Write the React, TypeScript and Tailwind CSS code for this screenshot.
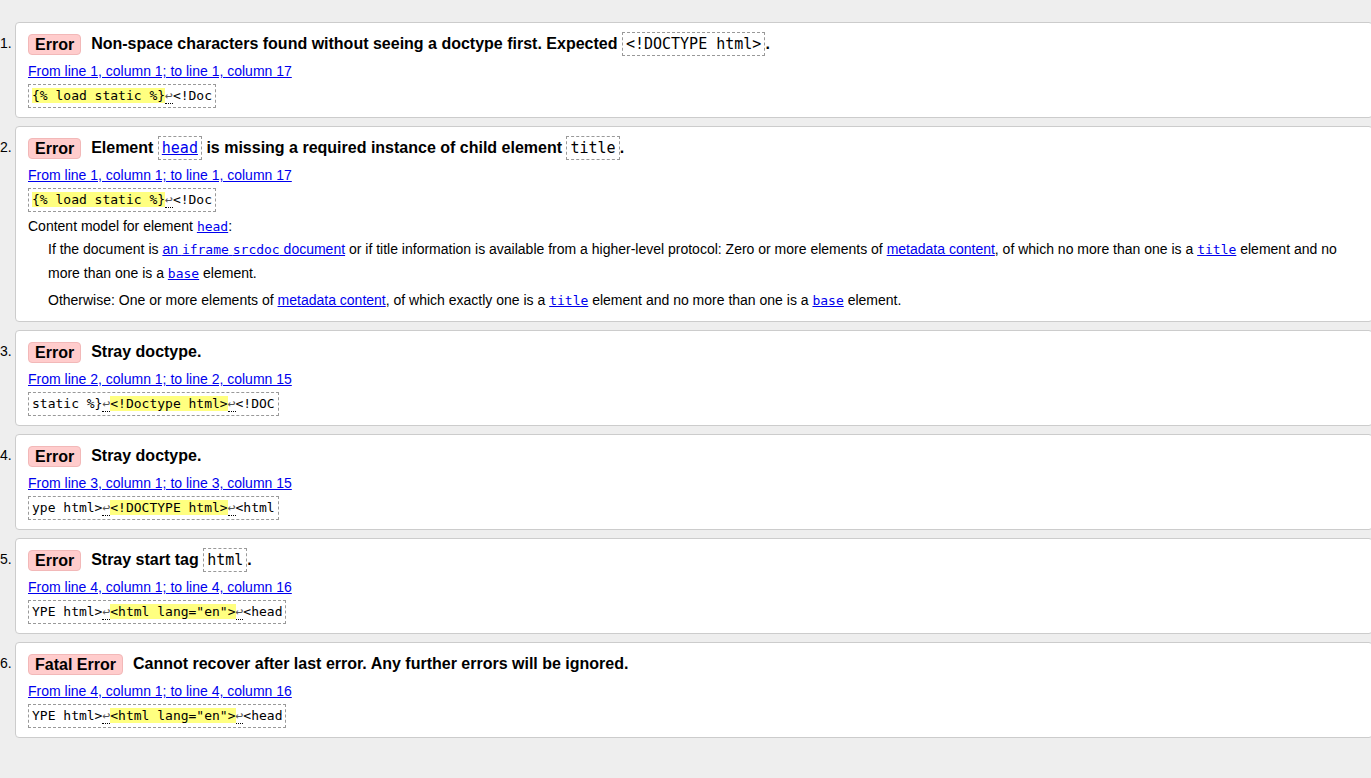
import React from 'react';

const sans = { fontFamily: '"Liberation Sans", Arial, sans-serif' };

const Ret = () => (
  <span className="border-b border-dotted border-black text-[#555]">↩</span>
);

const Hl = ({ children }: { children: React.ReactNode }) => (
  <span className="bg-[#ffff80]">{children}</span>
);

const Extract = ({ children }: { children: React.ReactNode }) => (
  <div className="mt-[2px]">
    <code className="inline-block border border-dashed border-[#999] px-[3px] py-[3px] font-['DejaVu_Sans_Mono',monospace] text-[13px] leading-[16px] whitespace-pre text-black">
      {children}
    </code>
  </div>
);

const Box = ({ children, link }: { children: React.ReactNode; link?: boolean }) => (
  <code
    className={
      'border border-dashed border-[#999] px-[3px] py-[2px] font-["DejaVu_Sans_Mono",monospace] text-[15px] leading-none font-normal ' +
      (link ? 'text-[#0000ee] underline' : 'text-black')
    }
  >
    {children}
  </code>
);

const Mono = ({ children }: { children: React.ReactNode }) => (
  <code className="font-['DejaVu_Sans_Mono',monospace] text-[13px] leading-none">{children}</code>
);

const Loc = ({ text }: { text: string }) => (
  <div className="mt-[6px] leading-[20px] text-[14px]">
    <a href="#" className="text-[#0000ee] underline">
      {text}
    </a>
  </div>
);

interface MsgProps {
  n: number;
  kind: string;
  title: React.ReactNode;
  children: React.ReactNode;
}

const Message = ({ n, kind, title, children }: MsgProps) => (
  <li className="flex">
    <span className="w-[15px] shrink-0 pt-[10px] pr-[4px] text-right text-[14px] leading-[22px] text-black whitespace-nowrap">
      {n}.
    </span>
    <div className="w-[1358px] shrink-0 rounded-[4px] border border-[#cccccc] bg-white px-[12px] pt-[10px] pb-[9px]">
      <div className="flex h-[22px] items-center leading-[22px]">
        <span className="inline-block h-[21px] rounded-[4px] border border-[#f2b8b8] bg-[#ffcccc] px-[6px] text-[16px] font-bold leading-[19px] text-black">
          {kind}
        </span>
        <span className="ml-[10px] text-[16px] font-bold text-black">{title}</span>
      </div>
      {children}
    </div>
  </li>
);

export default function App() {
  return (
    <div className="min-h-screen w-full overflow-hidden bg-[#eeeeee] text-black" style={sans}>
      <ol className="flex flex-col gap-[8px] pt-[22px]">
        <Message
          n={1}
          kind="Error"
          title={
            <>
              Non-space characters found without seeing a doctype first. Expected <Box>{'<!DOCTYPE html>'}</Box>.
            </>
          }
        >
          <Loc text="From line 1, column 1; to line 1, column 17" />
          <Extract>
            <Hl>{'{% load static %}'}</Hl>
            <Ret />
            {'<!Doc'}
          </Extract>
        </Message>

        <Message
          n={2}
          kind="Error"
          title={
            <>
              Element <Box link>head</Box> is missing a required instance of child element <Box>title</Box>.
            </>
          }
        >
          <Loc text="From line 1, column 1; to line 1, column 17" />
          <Extract>
            <Hl>{'{% load static %}'}</Hl>
            <Ret />
            {'<!Doc'}
          </Extract>
          <div className="mt-[3px] text-[14px] leading-[22px]">
            Content model for element{' '}
            <a href="#" className="text-[#0000ee] underline">
              <Mono>head</Mono>
            </a>
            :
          </div>
          <div className="ml-[20px] text-[14px] leading-[24px]">
            <p>
              If the document is{' '}
              <a href="#" className="text-[#0000ee] underline">
                an <Mono>iframe</Mono> <Mono>srcdoc</Mono> document
              </a>{' '}
              or if title information is available from a higher-level protocol: Zero or more elements of{' '}
              <a href="#" className="text-[#0000ee] underline">
                metadata content
              </a>
              , of which no more than one is a{' '}
              <a href="#" className="text-[#0000ee] underline">
                <Mono>title</Mono>
              </a>{' '}
              element and no more than one is a{' '}
              <a href="#" className="text-[#0000ee] underline">
                <Mono>base</Mono>
              </a>{' '}
              element.
            </p>
            <p className="mt-[3px]">
              Otherwise: One or more elements of{' '}
              <a href="#" className="text-[#0000ee] underline">
                metadata content
              </a>
              , of which exactly one is a{' '}
              <a href="#" className="text-[#0000ee] underline">
                <Mono>title</Mono>
              </a>{' '}
              element and no more than one is a{' '}
              <a href="#" className="text-[#0000ee] underline">
                <Mono>base</Mono>
              </a>{' '}
              element.
            </p>
          </div>
        </Message>

        <Message n={3} kind="Error" title="Stray doctype.">
          <Loc text="From line 2, column 1; to line 2, column 15" />
          <Extract>
            {'static %}'}
            <Ret />
            <Hl>{'<!Doctype html>'}</Hl>
            <Ret />
            {'<!DOC'}
          </Extract>
        </Message>

        <Message n={4} kind="Error" title="Stray doctype.">
          <Loc text="From line 3, column 1; to line 3, column 15" />
          <Extract>
            {'ype html>'}
            <Ret />
            <Hl>{'<!DOCTYPE html>'}</Hl>
            <Ret />
            {'<html'}
          </Extract>
        </Message>

        <Message
          n={5}
          kind="Error"
          title={
            <>
              Stray start tag <Box>html</Box>.
            </>
          }
        >
          <Loc text="From line 4, column 1; to line 4, column 16" />
          <Extract>
            {'YPE html>'}
            <Ret />
            <Hl>{'<html lang="en">'}</Hl>
            <Ret />
            {'<head'}
          </Extract>
        </Message>

        <Message n={6} kind="Fatal Error" title="Cannot recover after last error. Any further errors will be ignored.">
          <Loc text="From line 4, column 1; to line 4, column 16" />
          <Extract>
            {'YPE html>'}
            <Ret />
            <Hl>{'<html lang="en">'}</Hl>
            <Ret />
            {'<head'}
          </Extract>
        </Message>
      </ol>
    </div>
  );
}
